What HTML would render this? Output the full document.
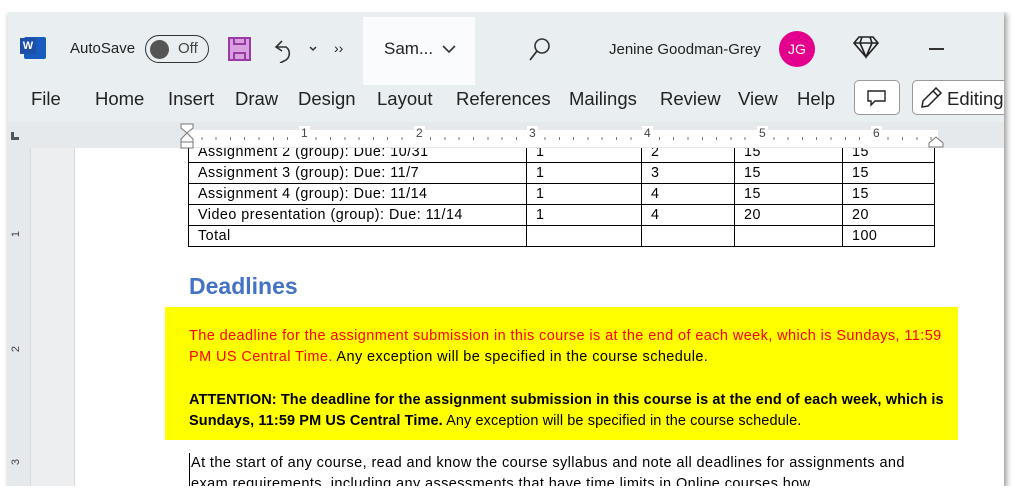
<!DOCTYPE html>
<html><head><meta charset="utf-8"><style>
*{margin:0;padding:0;box-sizing:border-box}
body{width:1015px;height:495px;background:#fff;position:relative;overflow:hidden;font-family:"Liberation Sans",sans-serif}
.win{position:absolute;left:8px;top:10px;width:996px;height:478px;background:#fff;box-shadow:2px 3px 6px rgba(0,0,0,.45);overflow:hidden}
.top{position:absolute;left:0;top:0;width:996px;height:112px;background:#e9eef1}
.a{position:absolute;white-space:nowrap}
.tab{font-size:18.5px;color:#222;top:78px}
.ruler{position:absolute;left:0;top:112px;width:996px;height:26px;background:#e6e9ec;z-index:3}
.rw{position:absolute;left:180px;top:8px;width:750px;height:17px;background:#fff;background-image:repeating-linear-gradient(90deg,transparent 0 13.3px,#777 13.3px 14.3px);background-size:100% 3px;background-repeat:no-repeat;background-position:0 7px}
.vr{position:absolute;left:0;top:138px;width:22px;height:340px;background:#e6e9ec}
.mg{position:absolute;left:22px;top:138px;width:45px;height:340px;background:#eceef0;border-left:1px solid #d8d8d8;border-right:1px solid #d8d8d8}
table{position:absolute;left:180px;top:131px;border-collapse:collapse;font-family:"Liberation Sans",sans-serif;font-size:14.3px;letter-spacing:0.5px}
td{border:1px solid #000;height:21px;padding:0 9px;line-height:19px}
.doc{font-size:14.5px;line-height:21px;letter-spacing:0.4px}
.rn{position:absolute;top:4px;font-size:12px;color:#444;background:#fff;padding:0 2px}
</style></head><body>
<div class="win">
<div class="top"></div>
<div class="a" style="left:16px;top:27px;width:22px;height:22px;background:#185abd;border-radius:2px"></div>
<div class="a" style="left:12px;top:28px;width:16px;height:16px;background:#1e4fa8;color:#fff;font-size:11px;font-weight:bold;text-align:center;line-height:16px">W</div>
<div class="a" style="left:62px;top:30px;font-size:15px;color:#222">AutoSave</div>
<div class="a" style="left:137px;top:25px;width:64px;height:28px;border:1.5px solid #333;border-radius:14px"></div>
<div class="a" style="left:142px;top:30px;width:19px;height:19px;border-radius:50%;background:#555"></div>
<div class="a" style="left:170px;top:30px;font-size:15px;color:#444">Off</div>
<div class="a" style="left:220px;top:27px;width:23px;height:24px;background:#d9a0df;border:2px solid #9b3aa5"></div>
<div class="a" style="left:225px;top:27px;width:13px;height:8px;border:2px solid #9b3aa5;border-top:none"></div>
<div class="a" style="left:225px;top:42px;width:13px;height:9px;border:2px solid #9b3aa5;border-bottom:none"></div>
<svg class="a" style="left:262px;top:25px" width="50" height="28"><path d="M12 6 L6 12 L12 16 M6 12 H16 A8 8 0 0 1 14 26 L10 28" fill="none" stroke="#333" stroke-width="1.6"/><path d="M40 12 l3 3 3-3" fill="none" stroke="#333" stroke-width="1.5"/></svg>
<div class="a" style="left:326px;top:30px;font-size:14px;color:#222">››</div>
<div class="a" style="left:355px;top:7px;width:112px;height:68px;background:#fafbfc"></div>
<div class="a" style="left:376px;top:29px;font-size:17px;color:#222">Sam...</div>
<svg class="a" style="left:433px;top:33px" width="16" height="12"><path d="M2 3 l6 6 6-6" fill="none" stroke="#333" stroke-width="1.6"/></svg>
<svg class="a" style="left:520px;top:26px" width="24" height="26"><circle cx="14" cy="10" r="7" fill="none" stroke="#333" stroke-width="1.6"/><path d="M9 15 L2 24" stroke="#333" stroke-width="1.8"/></svg>
<div class="a" style="left:601px;top:31px;font-size:15px;color:#222">Jenine Goodman-Grey</div>
<div class="a" style="left:771px;top:21px;width:36px;height:36px;border-radius:50%;background:#e3008c;color:#fff;font-size:14px;text-align:center;line-height:36px">JG</div>
<svg class="a" style="left:845px;top:25px" width="26" height="24"><path d="M6 2 H20 L25 8 L13 22 L1 8 Z M1 8 H25 M9 2 L7 8 L13 22 L19 8 L17 2" fill="none" stroke="#222" stroke-width="1.6"/></svg>
<div class="a" style="left:921px;top:38px;width:15px;height:1.5px;background:#333"></div>
<div class="a tab" style="left:23px">File</div>
<div class="a tab" style="left:87px">Home</div>
<div class="a tab" style="left:160px">Insert</div>
<div class="a tab" style="left:227px">Draw</div>
<div class="a tab" style="left:290px">Design</div>
<div class="a tab" style="left:369px">Layout</div>
<div class="a tab" style="left:448px">References</div>
<div class="a tab" style="left:561px">Mailings</div>
<div class="a tab" style="left:652px">Review</div>
<div class="a tab" style="left:730px">View</div>
<div class="a tab" style="left:789px">Help</div>
<div class="a" style="left:846px;top:70px;width:46px;height:35px;border:1px solid #999;border-radius:5px;background:#fff"></div>
<svg class="a" style="left:858px;top:79px" width="22" height="18"><path d="M2 2 H19 V12 H9 L5 16 V12 H2 Z" fill="none" stroke="#222" stroke-width="1.4"/></svg>
<div class="a" style="left:904px;top:70px;width:100px;height:35px;border:1px solid #999;border-radius:5px;background:#fff"></div>
<svg class="a" style="left:910px;top:75px" width="26" height="26"><path d="M4 22 L5 16 L18 3 L23 8 L10 21 Z M15 6 L20 11" fill="none" stroke="#222" stroke-width="1.5"/></svg>
<div class="a" style="left:939px;top:78px;font-size:18.5px;color:#222">Editing</div>
<div class="ruler"><div class="rw"></div>
<div class="a" style="left:3px;top:10px;width:8px;height:8px;border-left:3px solid #555;border-bottom:3px solid #555"></div>
<div class="rn" style="left:291px">1</div>
<div class="rn" style="left:406px">2</div>
<div class="rn" style="left:519px">3</div>
<div class="rn" style="left:634px">4</div>
<div class="rn" style="left:749px">5</div>
<div class="rn" style="left:863px">6</div>
<svg class="a" style="left:170px;top:0" width="20" height="30"><path d="M3 2 H15 V6 L9 11 L3 6 Z M9 11 L3 17 V20 H15 V17 Z M3 20 V26 H15 V20" fill="#fff" stroke="#777"/></svg>
<svg class="a" style="left:919px;top:14px" width="18" height="12"><path d="M2 11 V7 L9 1 L16 7 V11 Z" fill="#fff" stroke="#777"/></svg>
</div>
<div class="vr"><div class="a" style="left:5px;top:80px;font-size:11px;color:#444;transform:rotate(-90deg)">1</div><div class="a" style="left:5px;top:195px;font-size:11px;color:#444;transform:rotate(-90deg)">2</div><div class="a" style="left:5px;top:308px;font-size:11px;color:#444;transform:rotate(-90deg)">3</div></div>
<div class="mg"></div>
<table>
<tr><td style="width:338px;color:#000">Assignment 2 (group): Due: 10/31</td><td style="width:115px">1</td><td style="width:93px">2</td><td style="width:108px">15</td><td style="width:92px">15</td></tr>
<tr><td>Assignment 3 (group): Due: 11/7</td><td>1</td><td>3</td><td>15</td><td>15</td></tr>
<tr><td>Assignment 4 (group): Due: 11/14</td><td>1</td><td>4</td><td>15</td><td>15</td></tr>
<tr><td>Video presentation (group): Due: 11/14</td><td>1</td><td>4</td><td>20</td><td>20</td></tr>
<tr><td>Total</td><td></td><td></td><td></td><td>100</td></tr>
</table>
<div class="a" style="left:181px;top:263px;font-size:23px;font-weight:bold;color:#4472c4">Deadlines</div>
<div class="a" style="left:157px;top:297px;width:793px;height:133px;background:#ffff00"></div>
<div class="a doc" style="left:181px;top:316px;color:#f00">The deadline for the assignment submission in this course is at the end of each week, which is Sundays, 11:59<br>PM US Central Time. <span style="color:#000">Any exception will be specified in the course schedule.</span></div>
<div class="a doc" style="left:181px;top:380px;color:#000;letter-spacing:0.1px"><b>ATTENTION: The deadline for the assignment submission in this course is at the end of each week, which is<br>Sundays, 11:59 PM US Central Time.</b> Any exception will be specified in the course schedule.</div>
<div class="a doc" style="left:181px;top:443px;color:#000;border-left:1px solid #000;padding-left:1px">At the start of any course, read and know the course syllabus and note all deadlines for assignments and<br>exam requirements, including any assessments that have time limits in Online courses how</div>
</div>
<div class="a" style="left:0;top:0;width:1015px;height:12px;background:#fff"></div>
<div class="a" style="left:0;top:486px;width:1015px;height:9px;background:#fff"></div>
</body></html>
